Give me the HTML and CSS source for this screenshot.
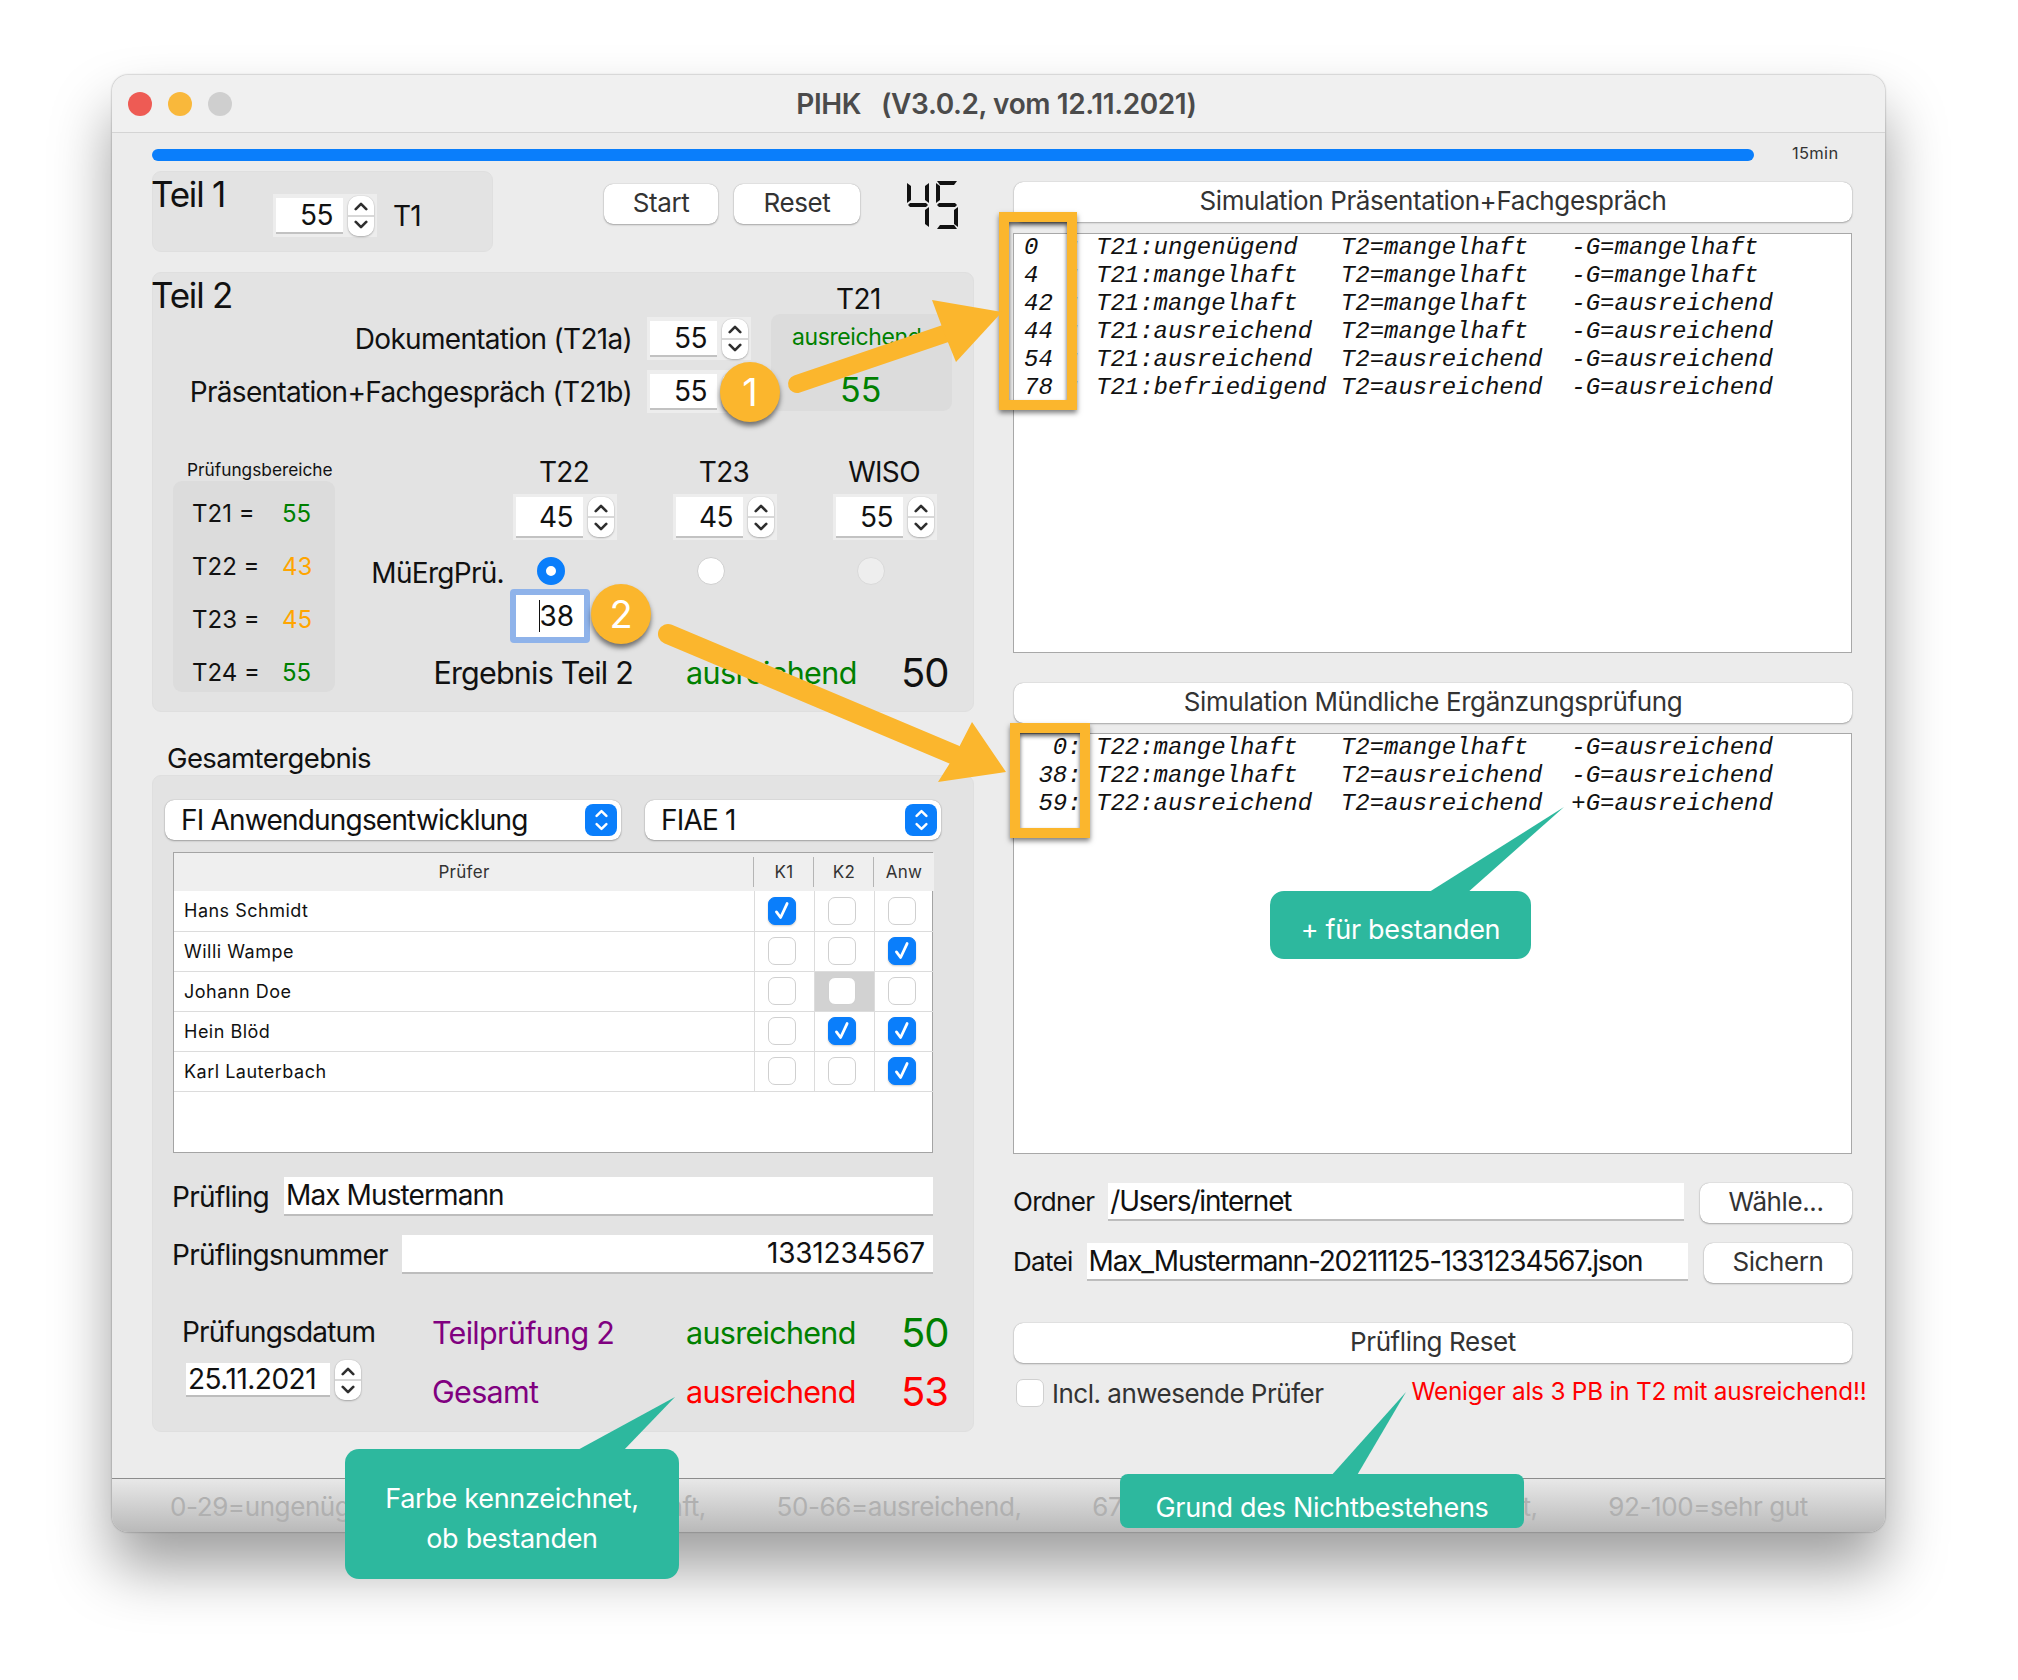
FILE: index.html
```html
<!DOCTYPE html>
<html lang="de">
<head>
    <meta charset="UTF-8">
    <meta name="viewport" content="width=device-width, initial-scale=1.0">
    <title>PIHK</title>
    <link rel="stylesheet" href="styles.css">
</head>
<body>

<svg class="defs" width="0" height="0">
    <symbol id="chev-up" viewBox="0 0 16 10"><polyline points="2,8 8,2 14,8"/></symbol>
    <symbol id="chev-down" viewBox="0 0 16 10"><polyline points="2,2 8,8 14,2"/></symbol>
    <symbol id="tick" viewBox="0 0 28 28"><polyline points="8,15 12.5,21 19.5,6"/></symbol>
</svg>

<div class="page">
    <div class="window">
        <div class="titlebar">
            <span class="light light-red"></span>
            <span class="light light-yellow"></span>
            <span class="light light-gray"></span>
            <div class="title">PIHK &nbsp; (V3.0.2, vom 12.11.2021)</div>
        </div>

        <div class="content">
            <div class="progress-row">
                <div class="progress"></div>
                <span class="progress-label">15min</span>
            </div>

            <div class="columns">
                <div class="col-left">
                    <div class="top-row">
                        <div class="panel teil1">
                            <div class="heading">Teil 1</div>
                            <div class="spin teil1-spin">
                                <div class="spin-val">55</div>
                                <div class="stepper"><svg class="chev"><use href="#chev-up"/></svg><svg class="chev"><use href="#chev-down"/></svg></div>
                            </div>
                            <span class="lbl t1-lbl">T1</span>
                        </div>
                        <button class="btn btn-start">Start</button>
                        <button class="btn btn-reset">Reset</button>
                        <div class="lcd" role="img" aria-label="45">
                            <div class="digit">
                                <i class="seg tl"></i><i class="seg tr"></i><i class="seg mid"></i><i class="seg br"></i>
                            </div>
                            <div class="digit">
                                <i class="seg top"></i><i class="seg tl"></i><i class="seg mid"></i><i class="seg br"></i><i class="seg bot"></i>
                            </div>
                        </div>
                    </div>

                    <div class="panel teil2">
                        <div class="t2-top">
                            <div class="t2-form">
                                <div class="heading">Teil 2</div>
                                <div class="form-row">
                                    <span class="lbl">Dokumentation (T21a)</span>
                                    <div class="spin spin-short">
                                        <div class="spin-val">55</div>
                                        <div class="stepper"><svg class="chev"><use href="#chev-up"/></svg><svg class="chev"><use href="#chev-down"/></svg></div>
                                    </div>
                                </div>
                                <div class="form-row form-row-2">
                                    <span class="lbl">Präsentation+Fachgespräch (T21b)</span>
                                    <div class="spin spin-short">
                                        <div class="spin-val">55</div>
                                        <div class="stepper"><svg class="chev"><use href="#chev-up"/></svg><svg class="chev"><use href="#chev-down"/></svg></div>
                                    </div>
                                </div>
                            </div>
                            <div class="t21-col">
                                <div class="t21-head">T21</div>
                                <div class="t21-box">
                                    <div class="t21-word green">ausreichend</div>
                                    <div class="t21-num green">55</div>
                                </div>
                            </div>
                        </div>

                        <div class="t2-low">
                            <div class="pb-col">
                                <div class="pb-title">Prüfungsbereiche</div>
                                <div class="pb-box">
                                    <div class="pb-row"><span>T21 =</span><span class="green">55</span></div>
                                    <div class="pb-row"><span>T22 =</span><span class="orange">43</span></div>
                                    <div class="pb-row"><span>T23 =</span><span class="orange">45</span></div>
                                    <div class="pb-row"><span>T24 =</span><span class="green">55</span></div>
                                </div>
                            </div>
                            <div class="tgrid-col">
                                <div class="tgrid">
                                    <span></span>
                                    <span class="lbl tg-head">T22</span>
                                    <span class="lbl tg-head">T23</span>
                                    <span class="lbl tg-head">WISO</span>

                                    <span></span>
                                    <div class="spin tg-spin"><div class="spin-val">45</div><div class="stepper"><svg class="chev"><use href="#chev-up"/></svg><svg class="chev"><use href="#chev-down"/></svg></div></div>
                                    <div class="spin tg-spin"><div class="spin-val">45</div><div class="stepper"><svg class="chev"><use href="#chev-up"/></svg><svg class="chev"><use href="#chev-down"/></svg></div></div>
                                    <div class="spin tg-spin"><div class="spin-val">55</div><div class="stepper"><svg class="chev"><use href="#chev-up"/></svg><svg class="chev"><use href="#chev-down"/></svg></div></div>

                                    <span class="lbl mue-lbl">MüErgPrü.</span>
                                    <div class="radio-cell"><span class="radio radio-on"></span></div>
                                    <div class="radio-cell"><span class="radio"></span></div>
                                    <div class="radio-cell"><span class="radio radio-off"></span></div>

                                    <span></span>
                                    <div class="focus-cell"><div class="focus-input"><span class="caret"></span>38</div></div>
                                    <span></span>
                                    <span></span>
                                </div>
                                <div class="ergebnis">
                                    <span class="erg-lbl">Ergebnis Teil 2</span>
                                    <span class="erg-word green">ausreichend</span>
                                    <span class="erg-num">50</span>
                                </div>
                            </div>
                        </div>
                    </div>

                    <div class="gesamt-head">Gesamtergebnis</div>
                    <div class="panel gesamt">
                        <div class="select-row">
                            <div class="select select-a">FI Anwendungsentwicklung<span class="select-btn"><svg class="chev"><use href="#chev-up"/></svg><svg class="chev"><use href="#chev-down"/></svg></span></div>
                            <div class="select select-b">FIAE 1<span class="select-btn"><svg class="chev"><use href="#chev-up"/></svg><svg class="chev"><use href="#chev-down"/></svg></span></div>
                        </div>

                        <div class="table-box">
                            <table class="pruefer">
                                <colgroup><col class="c-name"><col class="c-k"><col class="c-k"><col class="c-k"></colgroup>
                                <thead>
                                    <tr><th>Prüfer</th><th>K1</th><th>K2</th><th>Anw</th></tr>
                                </thead>
                                <tbody>
                                    <tr><td>Hans Schmidt</td><td><span class="check on"><svg><use href="#tick"/></svg></span></td><td><span class="check"></span></td><td><span class="check"></span></td></tr>
                                    <tr><td>Willi Wampe</td><td><span class="check"></span></td><td><span class="check"></span></td><td><span class="check on"><svg><use href="#tick"/></svg></span></td></tr>
                                    <tr><td>Johann Doe</td><td><span class="check"></span></td><td class="cell-sel"><span class="check"></span></td><td><span class="check"></span></td></tr>
                                    <tr><td>Hein Blöd</td><td><span class="check"></span></td><td><span class="check on"><svg><use href="#tick"/></svg></span></td><td><span class="check on"><svg><use href="#tick"/></svg></span></td></tr>
                                    <tr><td>Karl Lauterbach</td><td><span class="check"></span></td><td><span class="check"></span></td><td><span class="check on"><svg><use href="#tick"/></svg></span></td></tr>
                                </tbody>
                            </table>
                        </div>

                        <div class="field-row field-row-1">
                            <span class="lbl">Prüfling</span>
                            <div class="field">Max Mustermann</div>
                        </div>
                        <div class="field-row field-row-2">
                            <span class="lbl">Prüflingsnummer</span>
                            <div class="field field-right">1331234567</div>
                        </div>

                        <div class="summary">
                            <span class="lbl">Prüfungsdatum</span>
                            <span class="sum-text purple">Teilprüfung 2</span>
                            <span class="sum-text green">ausreichend</span>
                            <span class="sum-num green">50</span>

                            <div class="date-spin">
                                <div class="date-val">25.11.2021</div>
                                <div class="stepper"><svg class="chev"><use href="#chev-up"/></svg><svg class="chev"><use href="#chev-down"/></svg></div>
                            </div>
                            <span class="sum-text purple">Gesamt</span>
                            <span class="sum-text red">ausreichend</span>
                            <span class="sum-num red">53</span>
                        </div>
                    </div>
                </div>

                <div class="col-right">
                    <button class="btn btn-wide">Simulation Präsentation+Fachgespräch</button>
                    <pre class="sim sim-1"><em>0  : T21:ungenügend   T2=mangelhaft   -G=mangelhaft
4  : T21:mangelhaft   T2=mangelhaft   -G=mangelhaft
42 : T21:mangelhaft   T2=mangelhaft   -G=ausreichend
44 : T21:ausreichend  T2=mangelhaft   -G=ausreichend
54 : T21:ausreichend  T2=ausreichend  -G=ausreichend
78 : T21:befriedigend T2=ausreichend  -G=ausreichend</em></pre>

                    <button class="btn btn-wide btn-sim2">Simulation Mündliche Ergänzungsprüfung</button>
                    <pre class="sim sim-2"><em>  0: T22:mangelhaft   T2=mangelhaft   -G=ausreichend
 38: T22:mangelhaft   T2=ausreichend  -G=ausreichend
 59: T22:ausreichend  T2=ausreichend  +G=ausreichend</em></pre>

                    <div class="path-row path-row-1">
                        <span class="lbl">Ordner</span>
                        <div class="field">/Users/internet</div>
                        <button class="btn btn-path">Wähle...</button>
                    </div>
                    <div class="path-row path-row-2">
                        <span class="lbl">Datei</span>
                        <div class="field">Max_Mustermann-20211125-1331234567.json</div>
                        <button class="btn btn-path">Sichern</button>
                    </div>

                    <button class="btn btn-wide btn-preset">Prüfling Reset</button>
                    <div class="incl-row">
                        <span class="check"></span>
                        <span class="incl-lbl">Incl. anwesende Prüfer</span>
                        <span class="warn">Weniger als 3 PB in T2 mit ausreichend!!</span>
                    </div>
                </div>
            </div>
        </div>

        <div class="statusbar">
            <span>0-29=ungenügend,</span>
            <span>30-49=mangelhaft,</span>
            <span>50-66=ausreichend,</span>
            <span>67-81=befriedigend,</span>
            <span>82-91=gut,</span>
            <span>92-100=sehr gut</span>
        </div>
    </div>

    <!-- annotations on top of the screenshot -->
    <div class="mark mark-1"></div>
    <div class="mark mark-2"></div>

    <svg class="overlay" viewBox="0 0 2018 1680">
        <line class="arrow-shaft" x1="797" y1="384" x2="950" y2="332" stroke-width="18"/>
        <polygon class="arrow-head" points="932,300 1002,312 956,362 945,335"/>
        <line class="arrow-shaft" x1="668" y1="634" x2="955" y2="755" stroke-width="20"/>
        <polygon class="arrow-head" points="972,722 1006,772 938,782 955,755"/>
        <polygon class="tail" points="574,1452 622,1452 675,1397"/>
        <polygon class="tail" points="1426,894 1466,894 1564,807"/>
        <polygon class="tail" points="1330,1477 1356,1477 1406,1392"/>
    </svg>

    <div class="badge badge-1">1</div>
    <div class="badge badge-2">2</div>

    <div class="callout callout-farbe">Farbe kennzeichnet,<br>ob bestanden</div>
    <div class="callout callout-plus">+ für bestanden</div>
    <div class="callout callout-grund">Grund des Nichtbestehens</div>
</div>

</body>
</html>
```

FILE: styles.css
```css
* {
    box-sizing: border-box;
}
html, body {
    margin: 0;
    padding: 0;
    background: #fff;
}
body {
    font-family: 'Inter', 'Liberation Sans', sans-serif;
    color: #111;
}
.defs {
    position: absolute;
}
.page {
    position: relative;
    width: 2018px;
    height: 1680px;
    padding: 75px 0 0 112px;
    overflow: hidden;
}
.window {
    display: flex;
    flex-direction: column;
    width: 1773px;
    height: 1457px;
    background: #ececec;
    border-radius: 16px;
    box-shadow: 0 0 2px rgba(0, 0, 0, 0.45), 0 36px 60px rgba(0, 0, 0, 0.38);
    overflow: hidden;
}

/* title bar */
.titlebar {
    display: flex;
    align-items: center;
    position: relative;
    flex: 0 0 58px;
    padding-left: 16px;
    gap: 16px;
    background: #f0f0f0;
    border-bottom: 1px solid #d4d4d4;
}
.light {
    width: 24px;
    height: 24px;
    border-radius: 50%;
}
.light-red { background: #ee5b54; }
.light-yellow { background: #f9b83b; }
.light-gray { background: #cfcfcf; }
.title {
    position: absolute;
    left: 0;
    right: 0;
    padding-right: 4px;
    text-align: center;
    font-size: 28px;
    font-weight: 600;
    letter-spacing: -0.4px;
    color: #4b4b4b;
}

/* main area */
.content {
    flex: 1;
    padding: 16px 0 0 40px;
}
.progress-row {
    display: flex;
    align-items: center;
    height: 12px;
}
.progress {
    width: 1602px;
    height: 12px;
    background: #0a7efb;
    border-radius: 6px;
}
.progress-label {
    margin: -5px 0 0 38px;
    font-size: 16.5px;
    letter-spacing: 0.3px;
    color: #333;
}
.columns {
    display: grid;
    grid-template-columns: 822px 839px;
    column-gap: 39px;
    margin-top: 10px;
}
.panel {
    background: #e3e3e3;
    border: 1px solid #dfdfdf;
    border-radius: 9px;
}
.heading {
    margin-left: -2px;
    font-size: 35px;
    line-height: 44px;
    letter-spacing: -1.2px;
    white-space: nowrap;
}
.lbl {
    font-size: 28px;
    letter-spacing: -0.7px;
    white-space: nowrap;
}
.green { color: #008000; }
.orange { color: #ffa500; }
.red { color: #ff0000; }
.purple { color: #800080; }

/* Buttons */
.btn {
    display: block;
    height: 40px;
    padding: 0 0 4px;
    font-family: inherit;
    font-size: 26px;
    letter-spacing: -0.4px;
    color: #333;
    background: #fff;
    border: none;
    border-radius: 9px;
    box-shadow: 0 0 1px rgba(0, 0, 0, 0.35), 0 1px 2px rgba(0, 0, 0, 0.28);
}
.btn-wide {
    width: 838px;
    margin-left: 1px;
}

/* number spinner */
.spin {
    display: inline-flex;
    align-items: center;
    gap: 5px;
    height: 46px;
    padding: 0 3px;
    background: #ededed;
}
.spin-val {
    width: 67px;
    height: 41px;
    padding-right: 10px;
    font-size: 28px;
    line-height: 41px;
    text-align: right;
    letter-spacing: -0.5px;
    background: #fff;
    border-bottom: 2px solid #c2c2c2;
}
.spin-short .spin-val,
.teil1-spin .spin-val {
    height: 36px;
    line-height: 35px;
}
.spin-short,
.teil1-spin {
    height: 43px;
}
.stepper {
    display: flex;
    flex-direction: column;
    flex: 0 0 26px;
    align-items: center;
    justify-content: space-around;
    width: 26px;
    height: 40px;
    padding: 2px 0;
    background: linear-gradient(#fff 48%, #d8d8d8 48%, #d8d8d8 52%, #fff 52%);
    border-radius: 10px;
    box-shadow: 0 0 1px rgba(0, 0, 0, 0.3), 0 1px 2px rgba(0, 0, 0, 0.25);
}
.chev {
    width: 14px;
    height: 9px;
    fill: none;
    stroke: #2e2e2e;
    stroke-width: 3;
    stroke-linecap: round;
    stroke-linejoin: round;
}

/* top row, left column */
.top-row {
    display: flex;
    align-items: flex-start;
    height: 81px;
}
.teil1 {
    display: flex;
    align-items: flex-start;
    width: 341px;
    height: 81px;
    margin-right: 111px;
}
.teil1 .heading {
    width: 122px;
}
.teil1-spin {
    margin-top: 22px;
}
.t1-lbl {
    margin: 27px 0 0 16px;
}
.btn-start {
    width: 114px;
    margin-top: 13px;
}
.btn-reset {
    width: 126px;
    margin: 13px 0 0 16px;
}
.lcd {
    display: flex;
    gap: 7px;
    margin: 10px 0 0 47px;
}
.digit {
    position: relative;
    width: 22px;
    height: 48px;
}
.seg {
    position: absolute;
    background: #111;
}
.seg.tl, .seg.tr, .seg.br {
    width: 4px;
    height: 20px;
    clip-path: polygon(0 0, 100% 15%, 100% 85%, 0 100%);
}
.seg.tl { left: 0; top: 2px; }
.seg.tr { right: 0; top: 2px; clip-path: polygon(100% 0, 100% 100%, 0 85%, 0 15%); }
.seg.br { right: 0; bottom: 2px; clip-path: polygon(100% 0, 100% 100%, 0 85%, 0 15%); }
.seg.top, .seg.bot {
    left: 1px;
    width: 20px;
    height: 4px;
}
.seg.top { top: 0; clip-path: polygon(0 0, 100% 0, 85% 100%, 15% 100%); }
.seg.bot { bottom: 0; clip-path: polygon(15% 0, 85% 0, 100% 100%, 0 100%); }
.seg.mid {
    left: 1px;
    top: 22px;
    width: 20px;
    height: 4px;
    clip-path: polygon(10% 0, 90% 0, 100% 50%, 90% 100%, 10% 100%, 0 50%);
}

/* Teil 2 */
.teil2 {
    height: 440px;
    margin-top: 20px;
}
.t2-top {
    display: flex;
}
.t2-form {
    width: 618px;
}
.form-row {
    display: flex;
    align-items: center;
    justify-content: flex-end;
    gap: 15px;
    padding-right: 20px;
}
.form-row-2 {
    margin-top: 10px;
}
.t21-col {
    width: 181px;
}
.t21-head {
    height: 41px;
    padding: 9px 6px 0 0;
    font-size: 28px;
    line-height: 34px;
    text-align: center;
    letter-spacing: -0.5px;
}
.t21-box {
    height: 97px;
    padding: 6px 0 0 21px;
    background: #dcdcdc;
    border-radius: 9px;
}
.t21-word {
    font-size: 23px;
    line-height: 34px;
    letter-spacing: -0.4px;
}
.t21-num {
    margin-top: 16px;
    padding-left: 48px;
    font-size: 34px;
    line-height: 40px;
}
.t2-low {
    display: flex;
    margin: 45px 0 0 20px;
}
.pb-col {
    width: 162px;
}
.pb-title {
    padding-left: 14px;
    font-size: 17.3px;
    line-height: 23px;
    white-space: nowrap;
}
.pb-box {
    height: 211px;
    padding: 6px 0 0 19px;
    background: #dcdcdc;
    border-radius: 9px;
}
.pb-row {
    display: flex;
    align-items: center;
    height: 53px;
    font-size: 24px;
}
.pb-row span:first-child {
    width: 90px;
}
.tgrid {
    display: grid;
    grid-template-columns: 149px 160px 160px 160px;
    grid-template-rows: 39px 46px 49px 55px;
    margin-top: -3px;
}
.tg-head {
    text-align: center;
    line-height: 34px;
}
.tg-spin {
    justify-self: start;
    margin-left: 29px;
}
.mue-lbl {
    justify-self: end;
    align-self: center;
    margin: 17px -20px 0 0;
}
.radio-cell {
    display: flex;
    align-items: center;
    padding: 13px 0 0 53px;
}
.radio {
    width: 28px;
    height: 28px;
    background: #fff;
    border: 1px solid #cfcfcf;
    border-radius: 50%;
}
.radio-on {
    background: #fff;
    border: 9px solid #0a7efb;
}
.radio-off {
    background: #eeeeee;
    border-color: #d9d9d9;
}
.focus-cell {
    padding-left: 26px;
}
.focus-input {
    display: flex;
    justify-content: flex-end;
    align-items: center;
    width: 80px;
    height: 54px;
    padding-right: 10px;
    font-size: 28px;
    background: #fff;
    border: 6px solid #8fb3ea;
    border-radius: 4px;
}
.caret {
    width: 1.5px;
    height: 32px;
    margin-right: -1px;
    background: #111;
}
.ergebnis {
    display: grid;
    grid-template-columns: 298px 268px auto;
    align-items: center;
    height: 48px;
    margin-top: 4px;
}
.erg-lbl {
    font-size: 30.5px;
    letter-spacing: -0.8px;
    text-align: right;
    white-space: nowrap;
}
.erg-word {
    margin-left: 53px;
    font-size: 30.5px;
    letter-spacing: -0.6px;
}
.erg-num {
    font-size: 40px;
    letter-spacing: -1px;
}

/* Gesamtergebnis */
.gesamt-head {
    height: 34px;
    margin-top: 29px;
    padding-left: 15px;
    font-size: 27.5px;
    line-height: 34px;
    letter-spacing: -0.6px;
}
.gesamt {
    height: 657px;
    padding: 24px 40px 0 20px;
}
.select-row {
    display: flex;
    gap: 24px;
    margin-left: -8px;
}
.select {
    display: flex;
    align-items: center;
    justify-content: space-between;
    flex: 0 0 auto;
    height: 40px;
    padding: 0 4px 0 16px;
    font-size: 28px;
    letter-spacing: -0.8px;
    background: #fff;
    border-radius: 9px;
    box-shadow: 0 0 1px rgba(0, 0, 0, 0.35), 0 1px 2px rgba(0, 0, 0, 0.28);
}
.select-a { width: 456px; }
.select-b { width: 296px; }
.select-btn {
    display: flex;
    flex-direction: column;
    align-items: center;
    justify-content: center;
    gap: 4px;
    width: 32px;
    height: 32px;
    background: #0a7efb;
    border-radius: 8px;
}
.select-btn .chev {
    width: 13px;
    height: 9px;
    stroke: #fff;
}
.table-box {
    height: 301px;
    margin-top: 12px;
    background: #fff;
    border: 1.5px solid #a4a4a4;
}
.pruefer {
    width: 100%;
    border-collapse: collapse;
    table-layout: fixed;
}
.c-name { width: 580px; }
.c-k { width: 60px; }
.pruefer th {
    height: 38px;
    padding: 0;
    font-size: 17px;
    font-weight: 400;
    letter-spacing: 0.3px;
    color: #333;
    background: #efefef;
    background-image: linear-gradient(#b5b5b5, #b5b5b5);
    background-size: 1.5px 30px;
    background-position: right 4px;
    background-repeat: no-repeat;
}
.pruefer th:last-child {
    background-image: none;
}
.pruefer td {
    height: 40px;
    padding: 0 4px 0 0;
    text-align: center;
    border-bottom: 1px solid #dcdcdc;
    border-right: 1px solid #dcdcdc;
}
.pruefer td:first-child {
    padding-left: 10px;
    font-size: 18px;
    letter-spacing: 0.5px;
    text-align: left;
}
.pruefer td:last-child {
    border-right: none;
}
.pruefer .cell-sel {
    background: #d2d2d2;
}
.check {
    display: inline-block;
    flex: 0 0 28px;
    width: 28px;
    height: 28px;
    vertical-align: middle;
    background: #fff;
    border: 1px solid #d0d0d0;
    border-radius: 7px;
}
.check.on {
    background: #0a7efb;
    border-color: #0a7efb;
    box-shadow: 0 1px 2px rgba(0, 0, 0, 0.2);
}
.check svg {
    display: block;
    width: 26px;
    height: 26px;
    fill: none;
    stroke: #fff;
    stroke-width: 3;
    stroke-linecap: round;
    stroke-linejoin: round;
}
.field-row {
    display: flex;
    align-items: center;
    margin-left: -1px;
}
.field {
    flex: 1;
    height: 39px;
    padding-left: 2px;
    font-size: 28px;
    line-height: 37px;
    letter-spacing: -0.9px;
    white-space: nowrap;
    background: #fff;
    border-bottom: 2px solid #bdbdbd;
}
.field-row-1 {
    margin-top: 24px;
    gap: 15px;
}
.field-row-2 {
    margin-top: 19px;
    gap: 14px;
}
.field-right {
    padding-right: 8px;
    text-align: right;
    letter-spacing: -0.2px;
}
.summary {
    display: grid;
    grid-template-columns: 250px 254px 215px auto;
    grid-template-rows: 44px 44px;
    row-gap: 15px;
    align-items: center;
    margin: 36px 0 0 9px;
}
.summary .lbl {
    letter-spacing: -0.8px;
}
.sum-text {
    font-size: 30.5px;
    letter-spacing: -0.7px;
    white-space: nowrap;
}
.sum-num {
    font-size: 40px;
    letter-spacing: -1px;
}
.date-spin {
    display: flex;
    align-items: center;
    gap: 5px;
    margin: -22px 0 0 4px;
}
.date-val {
    width: 144px;
    height: 34px;
    padding-left: 2px;
    font-size: 28px;
    line-height: 33px;
    letter-spacing: -0.5px;
    background: #fff;
    border-bottom: 2px solid #bdbdbd;
}

/* right column */
.col-right {
    padding-top: 11px;
}
.sim {
    height: 420px;
    margin: 11px 0 0;
    padding: 0 0 0 10px;
    font-family: 'Liberation Mono', monospace;
    font-size: 24px;
    line-height: 28px;
    background: #fff;
    border: 1.5px solid #a8a8a8;
    border-bottom-width: 1px;
    overflow: hidden;
}
.btn-sim2 {
    margin-top: 30px;
}
.sim-2 {
    height: 421px;
    margin-top: 10px;
}
.path-row {
    display: flex;
    align-items: flex-start;
    gap: 14px;
}
.path-row .lbl {
    font-size: 26px;
    line-height: 38px;
}
.path-row .field {
    flex: 1;
    height: 38px;
    line-height: 36px;
    letter-spacing: -1.2px;
}
.path-row-1 {
    margin-top: 29px;
}
.path-row-2 {
    margin-top: 20px;
}
.path-row-1 .btn-path {
    flex: 0 0 152px;
    margin-left: 2px;
}
.path-row-2 .btn-path {
    flex: 0 0 148px;
    margin-left: 2px;
}
.btn-preset {
    margin-top: 40px;
}
.incl-row {
    display: flex;
    align-items: flex-start;
    margin: 16px 0 0 3px;
}
.incl-lbl {
    margin-left: 8px;
    font-size: 26px;
    line-height: 30px;
    letter-spacing: -0.5px;
    color: #333;
    white-space: nowrap;
}
.warn {
    margin-left: 88px;
    font-size: 24.3px;
    line-height: 24px;
    letter-spacing: -0.2px;
    color: #ff0000;
    white-space: nowrap;
}

/* bottom bar */
.statusbar {
    display: flex;
    align-items: center;
    justify-content: space-between;
    flex: 0 0 54px;
    padding: 2px 77px 0 58px;
    font-size: 26px;
    letter-spacing: -0.4px;
    color: #b0b0b0;
    background: linear-gradient(#e8e8e8, #b9b9b9);
    border-top: 1.5px solid #8c8c8c;
}

/* annotations */
.overlay {
    position: absolute;
    left: 0;
    top: 0;
    width: 2018px;
    height: 1680px;
    pointer-events: none;
}
.arrow-shaft {
    stroke: #fbb62d;
    stroke-linecap: round;
}
.arrow-head {
    fill: #fbb62d;
}
.tail {
    fill: #2db89e;
}
.mark {
    position: absolute;
    border: 10px solid #fbb62d;
    box-shadow: 0 3px 5px rgba(0, 0, 0, 0.5), inset 0 3px 4px rgba(0, 0, 0, 0.65);
}
.mark-1 {
    left: 999px;
    top: 212px;
    width: 78px;
    height: 198px;
}
.mark-2 {
    left: 1010px;
    top: 723px;
    width: 80px;
    height: 115px;
}
.badge {
    position: absolute;
    width: 60px;
    height: 60px;
    font-size: 38px;
    line-height: 60px;
    text-align: center;
    color: #fff;
    background: #fbb62d;
    border-radius: 50%;
    box-shadow: 0 4px 5px rgba(0, 0, 0, 0.5);
}
.badge-1 {
    left: 720px;
    top: 362px;
}
.badge-2 {
    left: 591px;
    top: 584px;
}
.callout {
    position: absolute;
    font-size: 27px;
    letter-spacing: -0.3px;
    text-align: center;
    color: #fff;
    background: #2db89e;
    border-radius: 14px;
}
.callout-farbe {
    left: 345px;
    top: 1449px;
    width: 334px;
    height: 130px;
    padding-top: 30px;
    line-height: 40px;
}
.callout-plus {
    left: 1270px;
    top: 891px;
    width: 261px;
    height: 68px;
    padding-top: 18px;
    line-height: 42px;
}
.callout-grund {
    left: 1120px;
    top: 1474px;
    width: 404px;
    height: 54px;
    padding-top: 14px;
    line-height: 40px;
    border-radius: 8px;
}
```
